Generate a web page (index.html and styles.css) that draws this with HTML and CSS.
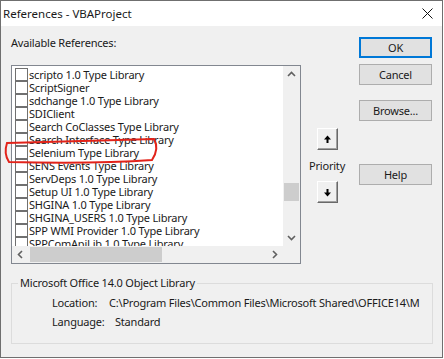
FILE: index.html
```html
<!DOCTYPE html>
<html>
<head>
<meta charset="utf-8">
<title>References - VBAProject</title>
<link rel="stylesheet" href="styles.css">
</head>
<body>
<div class="window">
  <div class="titlebar">
    <span class="title">References - VBAProject</span>
    <svg class="close" width="11" height="11" viewBox="0 0 11 11"><path d="M0.5 0.5 L10.5 10.5 M10.5 0.5 L0.5 10.5" stroke="#111" stroke-width="1" fill="none"/></svg>
  </div>
  <div class="content">
    <div class="top">
      <div class="leftcol">
        <div class="label">Available References:</div>
        <div class="listbox">
          <ul class="items">
            <li><span class="cb"></span>scripto 1.0 Type Library</li>
            <li><span class="cb"></span>ScriptSigner</li>
            <li><span class="cb"></span>sdchange 1.0 Type Library</li>
            <li><span class="cb"></span>SDIClient</li>
            <li><span class="cb"></span>Search CoClasses Type Library</li>
            <li><span class="cb"></span>Search Interface Type Library</li>
            <li><span class="cb"></span>Selenium Type Library</li>
            <li><span class="cb"></span>SENS Events Type Library</li>
            <li><span class="cb"></span>ServDeps 1.0 Type Library</li>
            <li><span class="cb"></span>Setup UI 1.0 Type Library</li>
            <li><span class="cb"></span>SHGINA 1.0 Type Library</li>
            <li><span class="cb"></span>SHGINA_USERS 1.0 Type Library</li>
            <li><span class="cb"></span>SPP WMI Provider 1.0 Type Library</li>
            <li><span class="cb"></span>SPPComApiLib 1.0 Type Library</li>
          </ul>
          <div class="vscroll">
            <svg class="arr" width="17" height="17" viewBox="0 0 17 17"><path d="M5 10 L8.5 6.5 L12 10" stroke="#606060" stroke-width="1.6" fill="none"/></svg>
            <div class="vtrack"><div class="vthumb"></div></div>
            <svg class="arr" width="17" height="17" viewBox="0 0 17 17"><path d="M5 7 L8.5 10.5 L12 7" stroke="#606060" stroke-width="1.6" fill="none"/></svg>
          </div>
          <div class="hscroll">
            <svg class="arr" width="17" height="17" viewBox="0 0 17 17"><path d="M10 5 L6.5 8.5 L10 12" stroke="#606060" stroke-width="1.6" fill="none"/></svg>
            <div class="htrack"><div class="hthumb"></div></div>
            <svg class="arr" width="17" height="17" viewBox="0 0 17 17"><path d="M7 5 L10.5 8.5 L7 12" stroke="#606060" stroke-width="1.6" fill="none"/></svg>
          </div>
          <div class="corner"></div>
        </div>
      </div>
      <div class="prio">
        <div class="pbtn"><svg width="9" height="9" viewBox="0 0 9 9"><path d="M4.5 0.5 L8 4.5 L5.5 4.5 L5.5 8 L3.5 8 L3.5 4.5 L1 4.5 Z" fill="#000"/></svg></div>
        <div class="plabel">Priority</div>
        <div class="pbtn down"><svg width="9" height="9" viewBox="0 0 9 9"><path d="M4.5 8.5 L8 4.5 L5.5 4.5 L5.5 1 L3.5 1 L3.5 4.5 L1 4.5 Z" fill="#000"/></svg></div>
      </div>
      <div class="buttons">
        <div class="btn default">OK</div>
        <div class="btn cancel">Cancel</div>
        <div class="btn browse">Browse...</div>
        <div class="btn help">Help</div>
      </div>
    </div>
    <fieldset class="group">
      <legend>Microsoft Office 14.0 Object Library</legend>
      <div class="row"><span class="k">Location:</span><span class="v">C:\Program Files\Common Files\Microsoft Shared\OFFICE14\M</span></div>
      <div class="row"><span class="k">Language:</span><span class="v lang">Standard</span></div>
    </fieldset>
  </div>
  <svg class="annot" width="444" height="359" viewBox="0 0 444 359"><path d="M7 143 C 50 142, 110 140, 154 139 C 158 146, 156 154, 152 160 C 110 163, 50 163, 9 162 C 5 156, 5 149, 7 143 Z" stroke="#e2231a" stroke-width="2" fill="none"/></svg>
</div>
</body>
</html>
```
FILE: styles.css
```css
html, body {
  margin: 0;
  padding: 0;
  background: #fff;
}
body {
  font-family: "Noto Sans", "Open Sans", sans-serif;
  font-size: 11px;
  letter-spacing: -0.2px;
  color: #1a1a1a;
}
.window {
  position: relative;
  width: 443px;
  height: 358px;
  box-sizing: border-box;
  border: 1px solid #6f6f6f;
  background: #f0f0f0;
  display: flex;
  flex-direction: column;
  overflow: hidden;
}
.titlebar {
  height: 25px;
  background: #fff;
  display: flex;
  align-items: center;
  justify-content: space-between;
  padding: 0 9px 0 2px;
  flex: none;
}
.title {
  font-size: 11.5px;
  line-height: 16px;
  letter-spacing: 0;
}
.close {
  display: block;
}
.content {
  padding: 9px 0 0 10px;
  flex: 1;
  display: flex;
  flex-direction: column;
}
.top {
  display: flex;
  align-items: flex-start;
}
.leftcol {
  width: 290px;
  flex: none;
}
.label {
  line-height: 16px;
  height: 16px;
  margin-bottom: 14px;
}
.listbox {
  width: 290px;
  height: 199px;
  box-sizing: border-box;
  border: 1px solid #828790;
  background: #fff;
  display: grid;
  grid-template-columns: 1fr 17px;
  grid-template-rows: 1fr 17px;
  overflow: hidden;
}
.items {
  list-style: none;
  margin: 0;
  padding: 2px 0 0 3px;
  overflow: hidden;
  grid-column: 1;
  grid-row: 1;
}
.items li {
  height: 13px;
  line-height: 13px;
  display: flex;
  align-items: center;
  white-space: nowrap;
}
.cb {
  width: 13px;
  height: 13px;
  box-sizing: border-box;
  border: 1px solid #707070;
  background: #fff;
  margin-right: 1px;
  flex: none;
}
.vscroll {
  grid-column: 2;
  grid-row: 1;
  background: #f0f0f0;
  display: flex;
  flex-direction: column;
}
.vtrack {
  flex: 1;
  position: relative;
}
.vthumb {
  position: absolute;
  left: 1px;
  right: 1px;
  top: 100px;
  height: 18px;
  background: #cdcdcd;
}
.hscroll {
  grid-column: 1;
  grid-row: 2;
  background: #f0f0f0;
  display: flex;
}
.htrack {
  flex: 1;
  position: relative;
}
.hthumb {
  position: absolute;
  top: 1px;
  bottom: 1px;
  left: 1px;
  width: 132px;
  background: #cdcdcd;
}
.arr {
  display: block;
  flex: none;
}
.corner {
  grid-column: 2;
  grid-row: 2;
  background: #f0f0f0;
}
.prio {
  margin-left: 16px;
  width: 34px;
  padding-top: 93px;
  display: flex;
  flex-direction: column;
  align-items: flex-start;
  flex: none;
}
.pbtn {
  width: 21px;
  height: 22px;
  box-sizing: border-box;
  border: 1px solid;
  border-color: #fff #696969 #696969 #fff;
  box-shadow: inset -1px -1px 0 #a0a0a0;
  background: #f0f0f0;
  display: flex;
  align-items: center;
  justify-content: center;
}
.plabel {
  margin: 8px 0 0 -8px;
  line-height: 16px;
  height: 16px;
}
.pbtn.down {
  margin-top: 7px;
}
.buttons {
  margin-left: 8px;
  padding-top: 2px;
  width: 73px;
  display: flex;
  flex-direction: column;
  flex: none;
}
.btn {
  height: 21px;
  box-sizing: border-box;
  border: 1px solid #adadad;
  background: #e1e1e1;
  display: flex;
  align-items: center;
  justify-content: center;
  line-height: 16px;
}
.btn.default {
  border: 2px solid #0078d7;
}
.btn.cancel {
  margin-top: 6px;
}
.btn.browse {
  margin-top: 15px;
}
.btn.help {
  margin-top: 43px;
}
.group {
  margin: 11px 0 0 0;
  width: 422px;
  box-sizing: border-box;
  height: 69px;
  border: 1px solid #dcdcdc;
  padding: 4px 0 0 6px;
}
.group legend {
  padding: 0 2px;
  line-height: 16px;
}
.row {
  display: flex;
  line-height: 16px;
  height: 16px;
  white-space: nowrap;
  padding-left: 34px;
  margin-bottom: 3px;
}
.k {
  width: 57px;
  flex: none;
}
.v.lang {
  padding-left: 6px;
}
.annot {
  position: absolute;
  left: -1px;
  top: -1px;
  pointer-events: none;
}
```
